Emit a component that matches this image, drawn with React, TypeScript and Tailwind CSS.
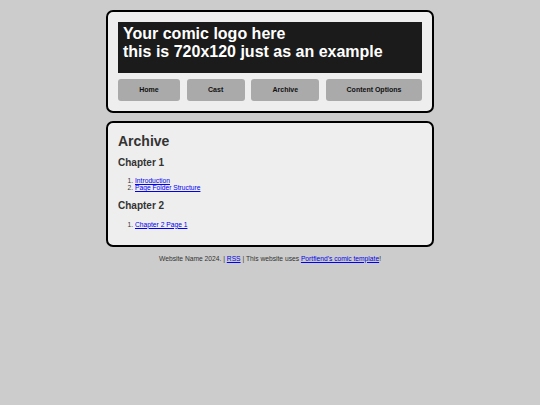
export default function App() {
  const nav = [
    { label: "Home", w: "w-[62px]" },
    { label: "Cast", w: "w-[58px]" },
    { label: "Archive", w: "w-[68px]" },
    { label: "Content Options", w: "w-[96px]" },
  ];
  return (
    <div className="min-h-[405px] bg-[#cccccc] pt-[10px] font-['Liberation_Sans',Arial,sans-serif] text-[#333]">
      <div className="mx-auto w-[328px]">
        <header className="rounded-[7px] border-2 border-black bg-[#eeeeee] p-[10px]">
          <div className="h-[51px] bg-[#1b1b1b] px-[5px] pt-[3px] text-[16px] font-bold leading-[18px] text-white">
            Your comic logo here
            <br />
            this is 720x120 just as an example
          </div>
          <nav className="mt-[6px] flex justify-between">
            {nav.map((n) => (
              <div
                key={n.label}
                className={`${n.w} flex h-[22px] items-center justify-center rounded-[3px] bg-[#aaaaaa] text-[7px] font-bold text-[#111]`}
              >
                {n.label}
              </div>
            ))}
          </nav>
        </header>

        <main className="mt-[8px] rounded-[7px] border-2 border-black bg-[#eeeeee] px-[10px] pt-[8px] pb-[17px]">
          <h1 className="text-[14px] font-bold leading-[20px]">Archive</h1>
          <h2 className="mt-[5px] text-[10px] font-bold leading-[14px]">Chapter 1</h2>
          <ol className="mt-[7px] list-decimal pl-[17px] text-[6.7px] leading-[7px]">
            <li>
              <a href="#" className="text-[#0000ee] underline">Introduction</a>
            </li>
            <li>
              <a href="#" className="text-[#0000ee] underline">Page Folder Structure</a>
            </li>
          </ol>
          <h2 className="mt-[8px] text-[10px] font-bold leading-[14px]">Chapter 2</h2>
          <ol className="mt-[7.5px] list-decimal pl-[17px] text-[6.7px] leading-[7px]">
            <li>
              <a href="#" className="text-[#0000ee] underline">Chapter 2 Page 1</a>
            </li>
          </ol>
        </main>

        <footer className="mt-[7px] text-center text-[6.7px] leading-[9px]">
          Website Name 2024. | <a href="#" className="text-[#0000ee] underline">RSS</a> | This website uses{" "}
          <a href="#" className="text-[#0000ee] underline">Portfiend's comic template</a>!
        </footer>
      </div>
    </div>
  );
}
